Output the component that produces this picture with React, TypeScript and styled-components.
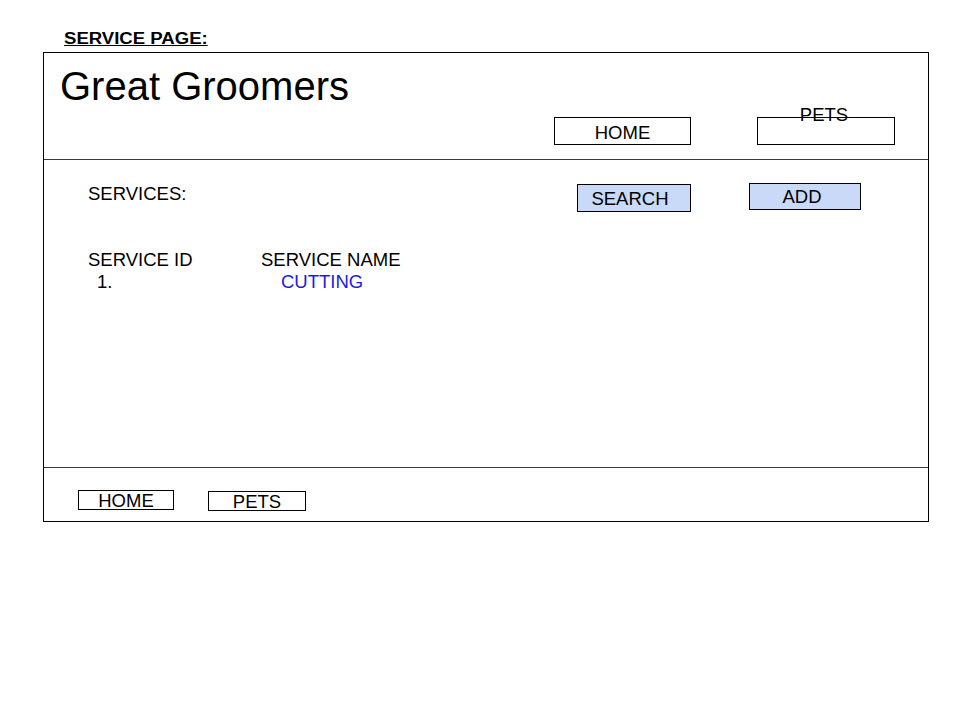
import React from "react";
import styled, { createGlobalStyle } from "styled-components";

const GlobalStyle = createGlobalStyle`
  html, body {
    margin: 0;
    padding: 0;
    background: #ffffff;
  }
  body {
    font-family: "Liberation Sans", Arial, sans-serif;
    color: #000000;
  }
  * { box-sizing: border-box; }
`;

const Page = styled.div`
  width: 960px;
  height: 720px;
  padding-top: 29px;
`;

const PageTitle = styled.div`
  margin-left: 64px;
  width: max-content;
  font-size: 16px;
  line-height: 20px;
  font-weight: bold;
  text-decoration: underline;
  height: 23px;
  transform: scaleX(1.16);
  transform-origin: left center;
`;

const Frame = styled.div`
  margin-left: 43px;
  width: 886px;
  height: 470px;
  border: 1px solid #000000;
  display: flex;
  flex-direction: column;
`;

const Header = styled.header`
  height: 107px;
  border-bottom: 1px solid #3a3a3a;
  display: flex;
  align-items: flex-start;
  padding: 0 33px 0 16px;
`;

const Brand = styled.h1`
  margin: 10px 0 0 0;
  font-size: 40px;
  line-height: 46px;
  font-weight: normal;
`;

const Nav = styled.nav`
  margin-left: auto;
  margin-top: 64px;
  display: flex;
  gap: 66px;
`;

const NavButton = styled.div<{ $w: number; $nudge?: number }>`
  width: ${(p) => p.$w}px;
  height: 28px;
  border: 1px solid #000000;
  padding-top: 5px;
  padding-right: ${(p) => p.$nudge ?? 0}px;
  text-align: center;
  font-size: 18.5px;
  line-height: 20px;
`;

const Label = styled.span<{ $shift?: number }>`
  display: block;
  margin-top: ${(p) => p.$shift ?? 0}px;
`;

const Main = styled.main`
  height: 308px;
  border-bottom: 1px solid #3a3a3a;
  padding: 24px 67px 0 44px;
  display: flex;
  flex-direction: column;
`;

const Toolbar = styled.div`
  display: flex;
  align-items: flex-start;
`;

const SectionTitle = styled.div`
  font-size: 18.5px;
  line-height: 20px;
`;

const Actions = styled.div`
  margin-left: auto;
  display: flex;
  align-items: flex-start;
  gap: 58px;
`;

const ActionButton = styled.div<{ $w: number; $h: number; $pt: number; $mt: number; $nudge: number }>`
  width: ${(p) => p.$w}px;
  height: ${(p) => p.$h}px;
  margin-top: ${(p) => p.$mt}px;
  padding-top: ${(p) => p.$pt}px;
  padding-right: ${(p) => p.$nudge}px;
  background: #c9daf8;
  border: 1px solid #000000;
  text-align: center;
  font-size: 18.5px;
  line-height: 20px;
`;

const Table = styled.div`
  margin-top: 37px;
  display: grid;
  grid-template-columns: 173px auto;
  font-size: 18.5px;
  line-height: 22px;
`;

const Cell = styled.div<{ $indent?: number; $link?: boolean }>`
  padding-left: ${(p) => p.$indent ?? 0}px;
  color: ${(p) => (p.$link ? "#1c1ce0" : "#000000")};
`;

const Footer = styled.footer`
  flex: 1;
  padding: 22px 0 0 34px;
  display: flex;
  align-items: flex-start;
  gap: 34px;
`;

const FooterButton = styled.div<{ $w: number; $mt: number }>`
  width: ${(p) => p.$w}px;
  height: 20px;
  margin-top: ${(p) => p.$mt}px;
  border: 1px solid #000000;
  padding-top: 1px;
  text-align: center;
  font-size: 18.5px;
  line-height: 18px;
`;

export default function App() {
  return (
    <>
      <GlobalStyle />
      <Page>
        <PageTitle>SERVICE PAGE:</PageTitle>
        <Frame>
          <Header>
            <Brand>Great Groomers</Brand>
            <Nav>
              <NavButton $w={137}>
                <Label>HOME</Label>
              </NavButton>
              <NavButton $w={138} $nudge={4}>
                <Label $shift={-18}>PETS</Label>
              </NavButton>
            </Nav>
          </Header>
          <Main>
            <Toolbar>
              <SectionTitle>SERVICES:</SectionTitle>
              <Actions>
                <ActionButton $w={114} $h={28} $pt={4} $mt={0} $nudge={8}>
                  SEARCH
                </ActionButton>
                <ActionButton $w={112} $h={27} $pt={3} $mt={-1} $nudge={6}>
                  ADD
                </ActionButton>
              </Actions>
            </Toolbar>
            <Table>
              <Cell>SERVICE ID</Cell>
              <Cell>SERVICE NAME</Cell>
              <Cell $indent={9}>1.</Cell>
              <Cell $indent={20} $link>
                CUTTING
              </Cell>
            </Table>
          </Main>
          <Footer>
            <FooterButton $w={96} $mt={0}>
              HOME
            </FooterButton>
            <FooterButton $w={98} $mt={1}>
              PETS
            </FooterButton>
          </Footer>
        </Frame>
      </Page>
    </>
  );
}
